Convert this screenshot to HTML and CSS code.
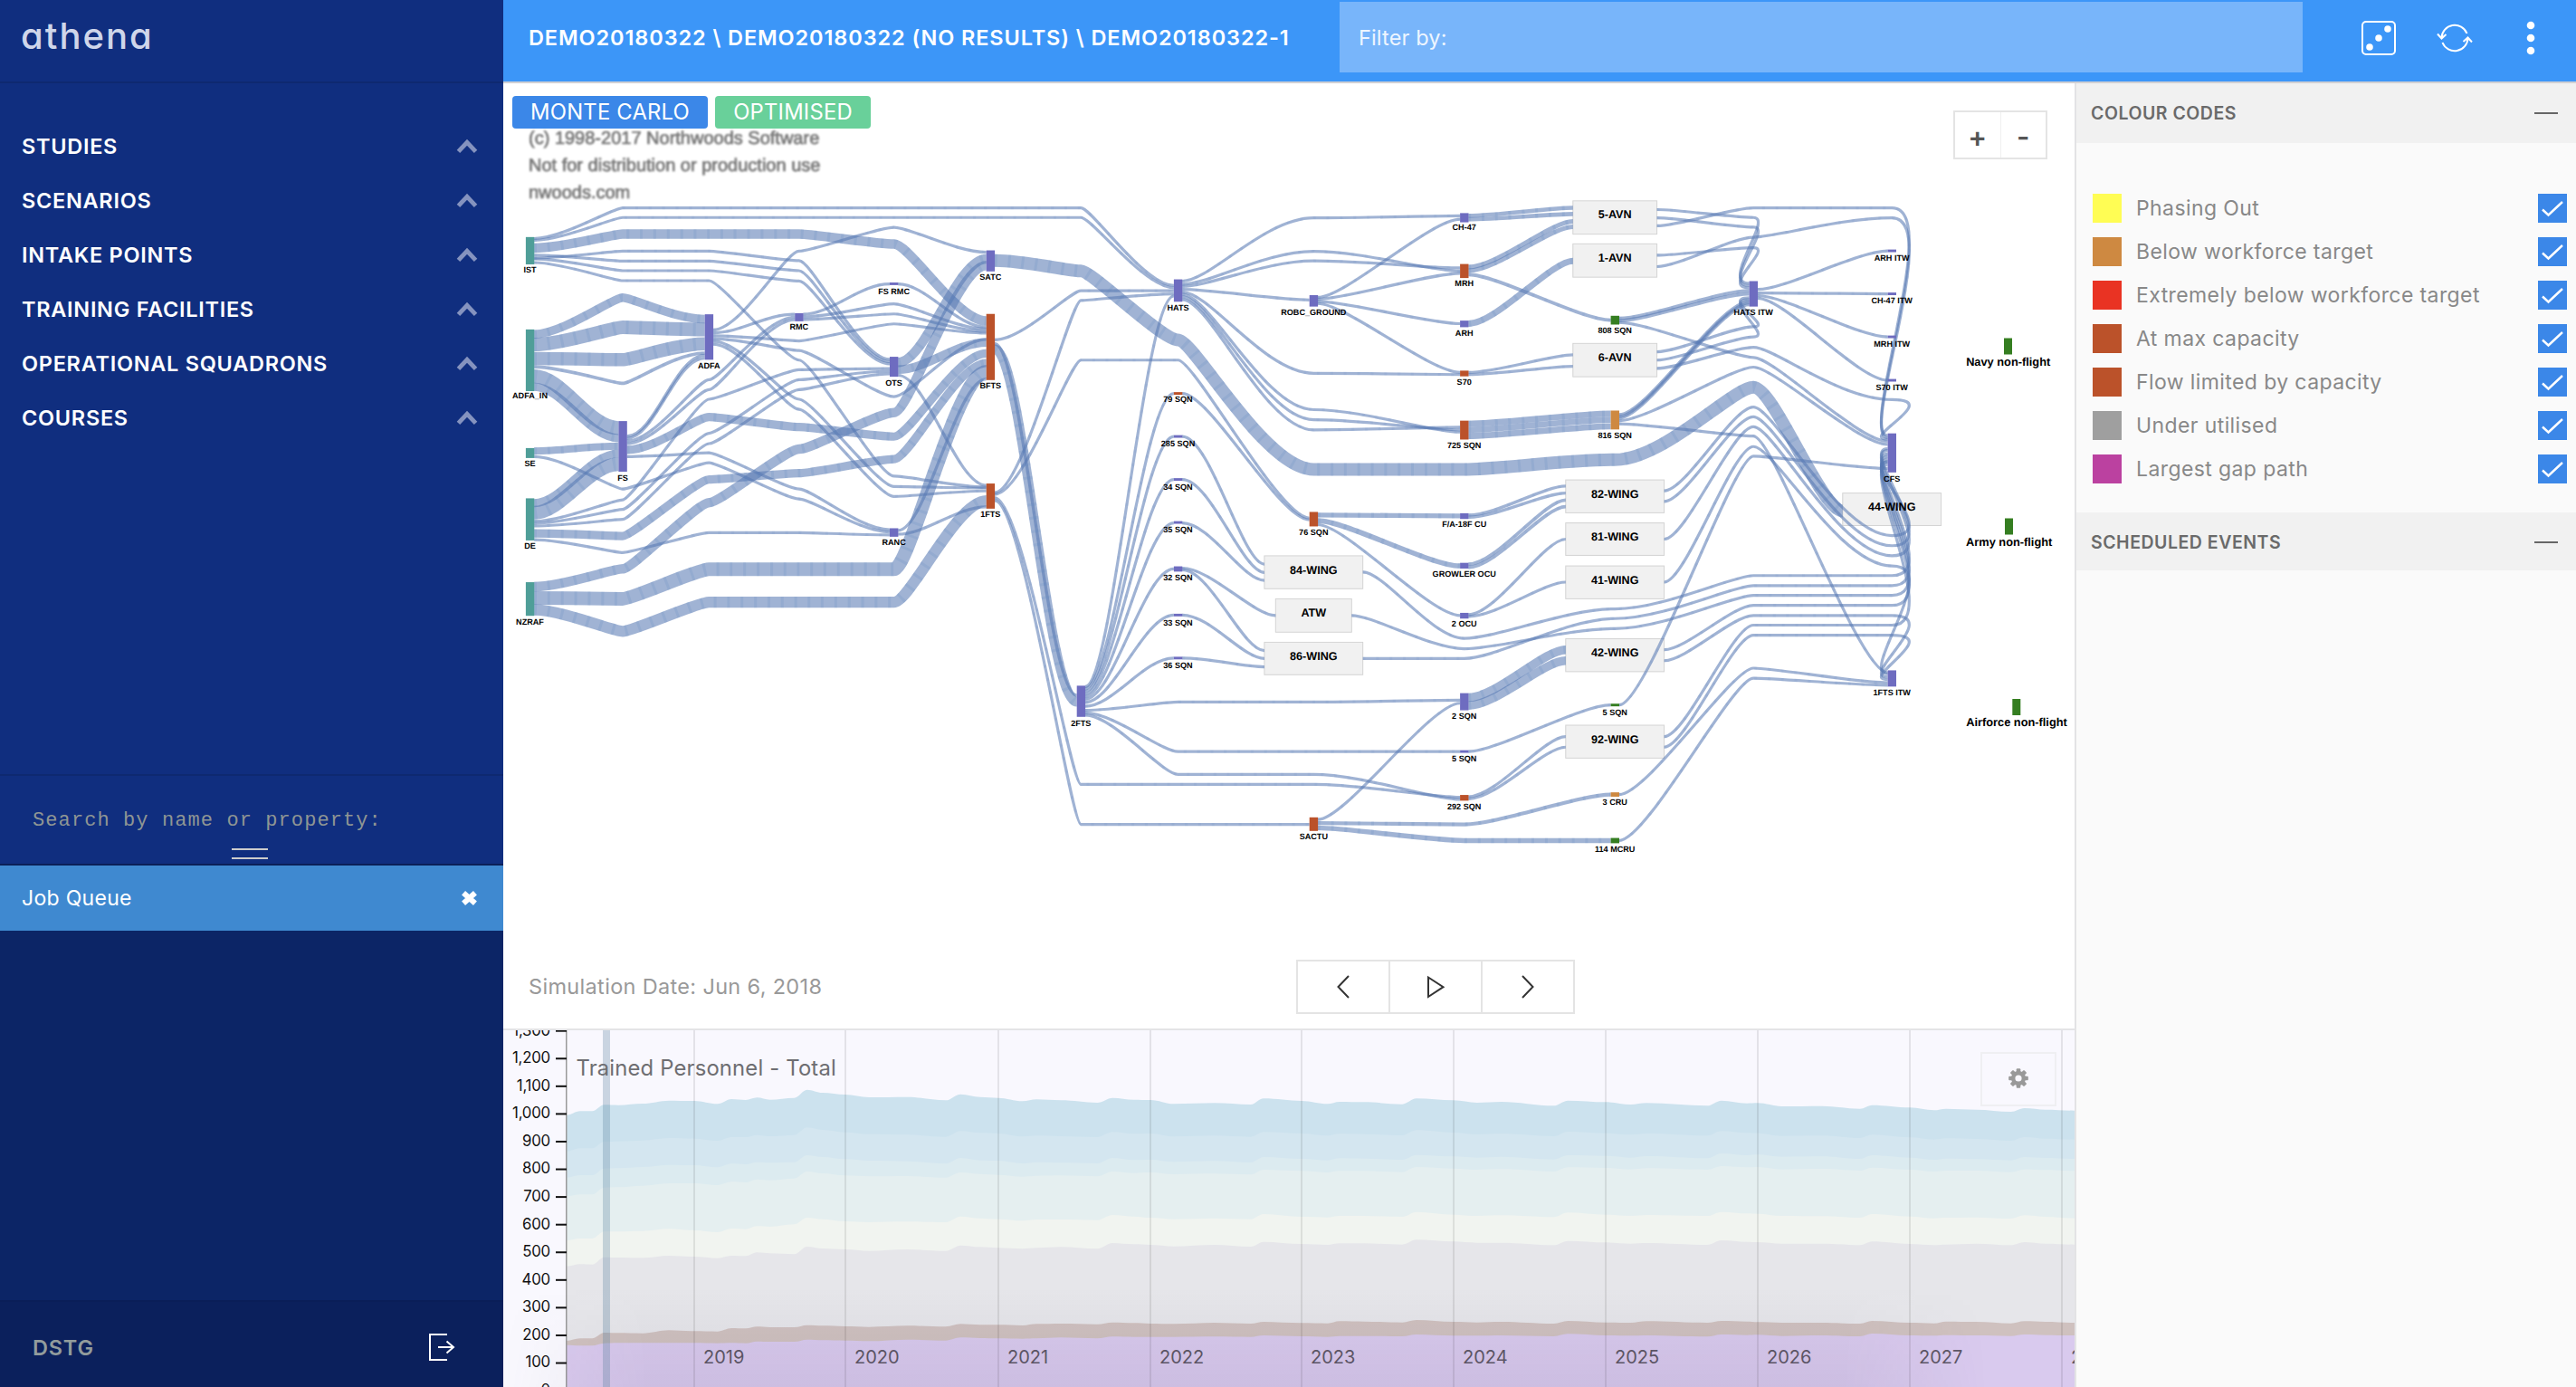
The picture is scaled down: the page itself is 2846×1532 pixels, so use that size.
FILE: index.html
```html
<!DOCTYPE html>
<html lang="en">
<head>
<meta charset="utf-8">
<title>athena</title>
<link rel="stylesheet" href="styles.css">
</head>
<body>
<div class="app">
  <aside class="sidebar">
    <div class="brand">athena</div>
    <nav class="menu">
      <a class="menu-item">STUDIES<svg class="chev" viewBox="0 0 22 16"><path d="M2 13.500 11 4l9 9.500"/></svg></a>
      <a class="menu-item">SCENARIOS<svg class="chev" viewBox="0 0 22 16"><path d="M2 13.500 11 4l9 9.500"/></svg></a>
      <a class="menu-item">INTAKE POINTS<svg class="chev" viewBox="0 0 22 16"><path d="M2 13.500 11 4l9 9.500"/></svg></a>
      <a class="menu-item">TRAINING FACILITIES<svg class="chev" viewBox="0 0 22 16"><path d="M2 13.500 11 4l9 9.500"/></svg></a>
      <a class="menu-item">OPERATIONAL SQUADRONS<svg class="chev" viewBox="0 0 22 16"><path d="M2 13.500 11 4l9 9.500"/></svg></a>
      <a class="menu-item">COURSES<svg class="chev" viewBox="0 0 22 16"><path d="M2 13.500 11 4l9 9.500"/></svg></a>
    </nav>
    <div class="search">
      <span class="search-hint">Search by name or property:</span>
      <span class="grip"></span>
    </div>
    <div class="queue-head"><span>Job Queue</span>
      <svg class="close" viewBox="0 0 16 14"><path d="M3 2.500 13 11.500M13 2.500 3 11.500"/></svg>
    </div>
    <div class="queue-body"></div>
    <footer class="account"><span>DSTG</span>
      <svg class="logout" viewBox="0 0 30 32"><path d="M21 2H2v28h19M11 16h17M20.500 9.500 28 16l-7.500 6.500"/></svg>
    </footer>
  </aside>

  <header class="topbar">
    <div class="crumbs">DEMO20180322 \ DEMO20180322 (NO RESULTS) \ DEMO20180322-1</div>
    <div class="filter">Filter by:</div>
    <div class="tools">
      <svg class="tool" viewBox="0 0 44 44"><rect x="4" y="4" width="36" height="36" rx="4"/><g class="solid"><circle cx="32" cy="12" r="3.800"/><circle cx="22" cy="22" r="3.800"/><circle cx="12" cy="32" r="3.800"/></g></svg>
      <svg class="tool" viewBox="0 0 44 44"><path d="M7.500 22a14.500 14.500 0 0 1 28-5M36.500 22a14.500 14.500 0 0 1-28 5M3 17.500l4.500 5 5-4.500M31.500 26l5-4.500 4.500 5"/></svg>
      <svg class="tool" viewBox="0 0 44 44"><g class="solid"><circle cx="22" cy="8" r="4.300"/><circle cx="22" cy="22" r="4.300"/><circle cx="22" cy="36" r="4.300"/></g></svg>
    </div>
  </header>

  <main class="main">
    <section class="stage">
      <svg id="flow" class="flow" viewBox="556 92 1736 946"></svg>
      <div class="tags"><span class="tag tag-blue">MONTE CARLO</span><span class="tag tag-green">OPTIMISED</span></div>
      <div class="zoom"><button>+</button><button>-</button></div>
    </section>
    <section class="playback">
      <span class="sim-date">Simulation Date: Jun 6, 2018</span>
      <div class="player">
        <button><svg viewBox="0 0 30 30"><path d="M21 3 9.500 15 21 27"/></svg></button>
        <button><svg viewBox="0 0 30 30"><path d="M7 4.500v21.500L23.500 15.200z"/></svg></button>
        <button><svg viewBox="0 0 30 30"><path d="M9 3 20.500 15 9 27"/></svg></button>
      </div>
    </section>
    <section class="chart-wrap">
      <svg id="chart" class="chart" viewBox="556 1138 1736 394"></svg>
      <div class="chart-shade"></div>
      <button class="gear"><svg viewBox="-12 -12 24 24"><g id="teeth"></g><path fill-rule="evenodd" d="M0-8a8 8 0 1 0 0 16a8 8 0 1 0 0-16zM0-3.600a3.600 3.600 0 1 1 0 7.200a3.600 3.600 0 1 1 0-7.200z"/></svg></button>
    </section>
  </main>

  <aside class="panel">
    <h2 class="panel-head">COLOUR CODES<i></i></h2>
    <ul class="legend">
      <li><b class="sw yellow"></b><span>Phasing Out</span><svg class="check" viewBox="0 0 32 32"><path d="M5 17.500l6.500 6L27 9"/></svg></li>
      <li><b class="sw ochre"></b><span>Below workforce target</span><svg class="check" viewBox="0 0 32 32"><path d="M5 17.500l6.500 6L27 9"/></svg></li>
      <li><b class="sw red"></b><span>Extremely below workforce target</span><svg class="check" viewBox="0 0 32 32"><path d="M5 17.500l6.500 6L27 9"/></svg></li>
      <li><b class="sw rust"></b><span>At max capacity</span><svg class="check" viewBox="0 0 32 32"><path d="M5 17.500l6.500 6L27 9"/></svg></li>
      <li><b class="sw rust"></b><span>Flow limited by capacity</span><svg class="check" viewBox="0 0 32 32"><path d="M5 17.500l6.500 6L27 9"/></svg></li>
      <li><b class="sw grey"></b><span>Under utilised</span><svg class="check" viewBox="0 0 32 32"><path d="M5 17.500l6.500 6L27 9"/></svg></li>
      <li><b class="sw magenta"></b><span>Largest gap path</span><svg class="check" viewBox="0 0 32 32"><path d="M5 17.500l6.500 6L27 9"/></svg></li>
    </ul>
    <h2 class="panel-head short">SCHEDULED EVENTS<i></i></h2>
  </aside>
</div>
<script src="app.js"></script>
</body>
</html>
```
FILE: styles.css
```css
* { box-sizing: border-box; margin: 0; padding: 0; }
body { width: 2846px; height: 1532px; overflow: hidden; background: #fff; font-family: Inter, "Liberation Sans", sans-serif; }
button { background: none; border: 0; font: inherit; display: flex; align-items: center; justify-content: center; }
.app { display: grid; grid-template-columns: 556px 1736px 554px; grid-template-rows: 92px 1440px; }

.sidebar { grid-row: 1 / 3; display: flex; flex-direction: column; background: #102e7f; color: #fff; }
.brand { height: 92px; border-bottom: 2px solid #0e2970; padding: 15px 0 0 23px; font-size: 40px; font-weight: 500; line-height: 50px; letter-spacing: 2px; color: #cfd6ea; font-feature-settings: "cv11"; }
.menu { height: 763px; padding-top: 39px; }
.menu-item { height: 60px; padding: 0 28px 0 24px; display: flex; align-items: center; justify-content: space-between; font-size: 23.500px; font-weight: 600; letter-spacing: 0.720px; }
.chev { width: 24px; height: 17px; fill: none; stroke: #8593bf; stroke-width: 4.500; }
.search { height: 101px; border-top: 2px solid #0e2970; border-bottom: 2px solid #0b2058; padding: 35px 0 0 36px; display: flex; flex-direction: column; }
.search-hint { height: 45px; line-height: 30px; font-family: "Liberation Mono", monospace; font-size: 22px; letter-spacing: 1.090px; color: #8f9694; }
.grip { width: 40px; height: 12px; margin-left: 220px; border-top: 2px solid #ccc; border-bottom: 2px solid #ccc; }
.queue-head { height: 72px; background: #3f89d0; display: flex; align-items: center; justify-content: space-between; padding: 0 27px 0 24px; font-size: 23px; letter-spacing: 0.300px; }
.close { width: 21px; height: 18px; fill: none; stroke: #fff; stroke-width: 4.600; }
.queue-body { flex: 1; background: #0c2566; }
.account { height: 96px; border-top: 2px solid #0a1e58; background: #0b205c; display: flex; align-items: center; justify-content: space-between; padding: 6px 53px 0 36px; color: #929c9c; font-size: 23.500px; font-weight: 600; letter-spacing: 0.800px; }
.logout { width: 30px; height: 32px; fill: none; stroke: #fff; stroke-width: 2; margin-top: -1px; }

.topbar { grid-column: 2 / 4; background: #3c96f8; border-bottom: 2px solid #d0d0d4; display: flex; color: #fff; }
.crumbs { width: 924px; padding-left: 28px; line-height: 84px; font-size: 23.500px; font-weight: 600; letter-spacing: 0.900px; white-space: nowrap; }
.filter { width: 1064px; height: 78px; margin-top: 2px; padding-left: 21px; line-height: 79px; background: #78b5fa; font-size: 23.500px; letter-spacing: 0.150px; color: #eef6ff; }
.tools { display: flex; gap: 40px; padding: 20px 0 0 62px; }
.tool { width: 44px; height: 44px; fill: none; stroke: #fff; stroke-width: 2; }
.solid { fill: #fff; stroke: none; }

.main { display: flex; flex-direction: column; }
.stage { position: relative; height: 946px; }
.flow { display: block; width: 1736px; height: 946px; text-rendering: geometricPrecision; }
.band, .stripe { fill: none; stroke: #587ab4; stroke-opacity: 0.570; }
.stripe { stroke: #5f8ac4; stroke-opacity: 0.180; stroke-dasharray: 3 11.800; }
.stripe.thin { stroke-opacity: 0.100; }
.wing { fill: #f1f1f1; stroke: #d4d4d4; stroke-width: 1; }
.node-label { font: bold 9.100px "Liberation Sans", Arial, sans-serif; text-anchor: middle; }
.wing-label { font: bold 12.600px "Liberation Sans", Arial, sans-serif; text-anchor: middle; }
.big-label { font: bold 12.800px "Liberation Sans", Arial, sans-serif; text-anchor: middle; }
.watermark { font: 20px "Liberation Sans", Arial, sans-serif; fill: #777; stroke: #777; stroke-width: 0.700; filter: blur(0.900px); }
.tags { position: absolute; left: 10px; top: 14px; display: flex; gap: 8px; }
.tag { height: 36px; line-height: 36px; border-radius: 4px; color: #fff; font-size: 23.800px; letter-spacing: 0.200px; text-align: center; }
.tag-blue { width: 216px; background: #3b87e8; }
.tag-green { width: 172px; background: #69d09a; }
.zoom { position: absolute; left: 1602px; top: 30px; width: 104px; height: 54px; border: 2px solid #e4e4e4; background: #fff; display: flex; }
.zoom button { flex: 1; padding-top: 2px; font-size: 31px; font-weight: 600; color: #555; }
.zoom button + button { border-left: 1px solid #f0f0f0; }

.playback { height: 100px; border-bottom: 2px solid #e4e4e6; display: flex; }
.sim-date { width: 876px; padding: 37px 0 0 28px; font-size: 23.500px; letter-spacing: 0.330px; line-height: 30px; color: #999; }
.player { margin-top: 22px; width: 308px; height: 60px; border: 2px solid #e4e4e4; display: flex; }
.player button { flex: 1; }
.player button + button { border-left: 2px solid #e4e4e4; }
.player svg { width: 30px; height: 30px; fill: none; stroke: #333; stroke-width: 2; }

.chart-wrap { position: relative; height: 394px; background: #f9f8fe; overflow: hidden; }
.chart { display: block; width: 1736px; height: 394px; }
.chart-shade { position: absolute; left: 0; right: 0; bottom: 0; height: 110px; background: linear-gradient(rgba(60, 50, 80, 0), rgba(60, 50, 80, 0.080)); -webkit-mask: linear-gradient(90deg, transparent 0, #000 160px, #000 1480px, transparent 1640px); }
.axis-label { font: 16.800px Inter, sans-serif; letter-spacing: -0.200px; text-anchor: end; fill: #111; }
.year { font: 20px Inter, sans-serif; fill: #5e5766; }
.chart-title { font: 23.800px Inter, sans-serif; letter-spacing: 0.180px; fill: #6e6e72; }
.gear { position: absolute; left: 1632px; top: 24px; width: 84px; height: 60px; border: 2px solid #efeff2; }
.gear svg { width: 24px; height: 24px; fill: #999; margin-top: -2px; margin-right: 1px; }

.panel { background: #fafafa; border-left: 2px solid #e3e3e5; }
.panel-head { height: 66px; background: #f1f1f1; display: flex; align-items: center; justify-content: space-between; padding: 0 20px 0 16px; font-size: 19.500px; font-weight: 600; letter-spacing: 0.520px; color: #6a6a6a; }
.panel-head.short { height: 64px; padding-top: 1px; }
.panel-head i { width: 26px; height: 2px; background: #666; }
.legend { list-style: none; height: 408px; padding-top: 48px; }
.legend li { height: 48px; display: flex; align-items: center; padding: 0 10px 0 18px; font-size: 23px; letter-spacing: 0.400px; color: #888; }
.legend span { flex: 1; padding-left: 16px; }
.sw { width: 32px; height: 32px; }
.check { width: 32px; height: 32px; background: #3b87e8; fill: none; stroke: #fff; stroke-width: 2.400; }
.yellow { background: #fffd54; } .ochre { background: #ce8941; } .red { background: #e93323; }
.rust { background: #bb522a; } .grey { background: #9f9f9f; } .magenta { background: #bb41a0; }
```
FILE: app.js
```js
const NS = 'http://www.w3.org/2000/svg';
function add(parent, tag, attrs, text) {
  const el = document.createElementNS(NS, tag);
  for (const k in attrs) el.setAttribute(k, attrs[k]);
  if (text !== undefined) el.textContent = text;
  parent.appendChild(el);
  return el;
}

/* ---------- workforce flow diagram ---------- */
const flow = document.getElementById('flow');

// Layer centres and the reach of the curve handles inside each layer.
const LAYER_X = [585.5, 688, 783.3, 882.8, 987.6, 1094.3, 1194.3, 1301.5, 1451.3, 1617.7, 1784.2, 1937.2, 2090.2];
const REACH = [12, 11, 13, 15, 18, 14, 12, 18, 54, 36, 54, 23, 58];
const westY = v => 90 + v / 2.45;
const eastY = v => 200 + v / 2.0632;

const TEAL = '#4f9e98', PURPLE = '#6e6cc0', RUST = '#bb522a', OCHRE = '#ce8941', GREEN = '#357e21';

// [layer, top, bottom, colour, label, label centre]
const westNodes = [
  [0, 421, 495, TEAL, 'IST', 509], [0, 671, 838, TEAL, 'ADFA_IN', 851], [0, 992, 1019, TEAL, 'SE', 1033],
  [0, 1128, 1242, TEAL, 'DE', 1256], [0, 1355, 1446, TEAL, 'NZRAF', 1462],
  [1, 919, 1056, PURPLE, 'FS', 1072], [2, 630, 753, PURPLE, 'ADFA', 768], [3, 627, 649, PURPLE, 'RMC', 663],
  [4, 544, 551, PURPLE, 'FS RMC', 568], [4, 745, 799, PURPLE, 'OTS', 815], [4, 1209, 1232, PURPLE, 'RANC', 1246],
  [5, 457, 514, PURPLE, 'SATC', 528], [5, 629, 808, RUST, 'BFTS', 822], [5, 1088, 1156, RUST, '1FTS', 1170]
];
const eastNodes = [
  [6, 1150, 1221, PURPLE, '2FTS', 1235], [7, 224, 275, PURPLE, 'HATS', 288], [7, 481, 487, RUST, '79 SQN', 498],
  [7, 579, 585, PURPLE, '285 SQN', 598], [7, 677, 683, PURPLE, '34 SQN', 697], [7, 775, 781, PURPLE, '35 SQN', 794],
  [7, 878, 890, PURPLE, '32 SQN', 903], [7, 986, 992, PURPLE, '33 SQN', 1006], [7, 1084, 1090, PURPLE, '36 SQN', 1104],
  [8, 260, 286, PURPLE, 'ROBC_GROUND', 298], [8, 754, 787, RUST, '76 SQN', 800], [8, 1450, 1481, RUST, 'SACTU', 1493],
  [9, 73, 94, PURPLE, 'CH-47', 106], [9, 189, 221, RUST, 'MRH', 232], [9, 318, 333, PURPLE, 'ARH', 346],
  [9, 432, 445, RUST, 'S70', 457], [9, 546, 589, RUST, '725 SQN', 602], [9, 757, 770, PURPLE, 'F/A-18F CU', 781],
  [9, 870, 883, PURPLE, 'GROWLER OCU', 895], [9, 984, 997, PURPLE, '2 OCU', 1008], [9, 1167, 1206, PURPLE, '2 SQN', 1219],
  [9, 1297, 1303, PURPLE, '5 SQN', 1316], [9, 1399, 1412, RUST, '292 SQN', 1425],
  [10, 307, 327, GREEN, '808 SQN', 340], [10, 523, 566, OCHRE, '816 SQN', 579], [10, 1191, 1197, GREEN, '5 SQN', 1210],
  [10, 1393, 1403, OCHRE, '3 CRU', 1415], [10, 1497, 1509, GREEN, '114 MCRU', 1522],
  [11, 228, 286, PURPLE, 'HATS ITW', 298],
  [12, 156, 162, PURPLE, 'ARH ITW', 175], [12, 254, 260, PURPLE, 'CH-47 ITW', 273], [12, 352, 358, PURPLE, 'MRH ITW', 371],
  [12, 451, 457, PURPLE, 'S70 ITW', 470], [12, 575, 664, PURPLE, 'CFS', 678], [12, 1115, 1152, PURPLE, '1FTS ITW', 1165]
];
// [layer, top, bottom, half width, label]
const wings = [
  [8, 854, 929, 54.4, '84-WING'], [8, 952, 1028, 42, 'ATW'], [8, 1051, 1125, 54.4, '86-WING'],
  [10, 45, 121, 46.4, '5-AVN'], [10, 143, 219, 46.4, '1-AVN'], [10, 370, 446, 46.4, '6-AVN'],
  [10, 681, 756, 54.4, '82-WING'], [10, 779, 853, 54.4, '81-WING'], [10, 877, 952, 54.4, '41-WING'],
  [10, 1043, 1118, 54.4, '42-WING'], [10, 1240, 1315, 54.4, '92-WING'], [12, 711, 785, 54.4, '44-WING']
];

// [width, layer, y, layer, y, ...]; layer -1 loops back into the node of the previous layer
const westLinks = [
  [10.5, 0,451, 1,413, 2,413, 3,413, 4,440, 5,648],
  [2.8, 0,470, 1,486, 2,486, 3,512, 4,758], [2.8, 0,478, 1,459, 2,459, 3,485, 4,752],
  [2.8, 0,480, 1,512, 2,512, 3,540, 4,764], [2.8, 0,490, 1,539, 2,539, 3,754, 4,1068, 5,1098],
  [9.5, 0,684, 1,585, 2,643], [15, 0,712, 1,665, 2,671], [14.5, 0,750, 1,753, 2,710], [3.3, 0,772, 1,817, 2,735],
  [15.3, 0,798, 1,938], [9, 0,826, 1,965], [8, 0,1000, 1,987], [2.8, 0,1015, 1,1103, 2,1032, 3,1130, 4,1219],
  [9, 0,1141, 1,1007], [15, 0,1167, 1,1036],
  [2.8, 0,1190, 1,1132, 2,860, 3,780, 4,777], [2.8, 0,1196, 1,1158, 2,952, 3,807, 4,784], [2.8, 0,1203, 1,1185, 2,980, 3,834, 4,791],
  [9.2, 0,1223, 1,1230, 2,1077, 3,1060, 4,1022, 5,762], [2.8, 0,1240, 1,1275, 2,1221, 3,1221, 4,1227],
  [10.5, 0,1367, 1,1319, 2,1140, 3,995, 4,896, 5,498], [15, 0,1398, 1,1400, 2,1320, 3,1320, 4,1320, 5,785],
  [12.3, 0,1430, 1,1488, 2,1409, 3,1409, 4,1409, 5,1135],
  [2.8, 2,672, 3,459, 4,395, 5,462], [2.8, 2,680, 3,630], [2.8, 2,688, 3,702, 4,656, 5,681], [2.8, 2,696, 3,728, 4,853, 5,698],
  [2.8, 2,703, 3,860, 4,1096, 5,1100], [2.8, 2,711, 3,887, 4,1123, 5,1108],
  [2.8, 1,960, 2,741], [2.8, 1,966, 2,749], [2.8, 1,973, 2,807, 3,638], [2.8, 1,980, 2,834, 3,645],
  [9.2, 1,997, 2,908, 3,935, 4,961, 5,736], [2.8, 1,1015, 2,1005, 3,1103, 4,1213],
  [2.8, 3,630, 4,548], [2.8, 4,548, 5,665], [2.8, 3,637, 4,602, 5,670], [2.8, 3,644, 4,629, 5,676],
  [10.5, 4,760, 5,480], [9.5, 4,780, 5,706], [2.8, 4,795, 5,1093],
  [2.8, 4,1215, 5,805], [2.8, 4,1225, 5,1151]
];
const eastLinks = [
  [2.8, 0,131, 1,61, 6,61, 7,238], [2.8, 0,135, 1,83, 6,83, 7,243],
  [14, 5,181, 6,205, 7,362, 8,657, 9,657, 10,635, 11,470, 12,752],
  [2.8, 5,362, 6,250, 7,250], [3, 5,371, 6,1172], [10.5, 5,383, 6,1187],
  [2.8, 5,710, 6,272, 7,257], [2.8, 5,714, 6,408, 7,408, 8,768], [2.8, 5,722, 6,1375, 7,1375, 8,1375, 9,1404], [2.8, 5,728, 6,1466, 7,1466, 8,1466],
  [2.8, 6,1152, 7,262], [2.8, 6,1157, 7,484], [2.8, 6,1163, 7,582], [2.8, 6,1169, 7,680], [2.8, 6,1175, 7,779],
  [2.8, 6,1181, 7,884], [2.8, 6,1188, 7,989], [2.8, 6,1197, 7,1087], [2.8, 6,1206, 7,1187, 8,1187, 9,1183],
  [2.8, 6,1212, 7,1300, 8,1300, 9,1300], [2.8, 6,1217, 7,1352, 8,1352, 9,1409],
  [2.8, 7,228, 8,84, 9,79], [2.8, 7,235, 8,160, 9,205], [2.8, 7,240, 8,182, 9,198], [2.8, 7,247, 8,271],
  [2.8, 7,253, 8,438, 9,441], [2.8, 7,258, 8,521, 9,572], [2.8, 7,264, 8,544, 9,567], [2.8, 7,270, 8,567, 9,561],
  [2.8, 7,484, 8,772], [2.8, 7,582, 8,873], [2.8, 7,680, 8,892], [2.8, 7,779, 8,910],
  [2.8, 7,882, 8,990], [2.8, 7,886, 8,1070], [2.8, 7,989, 8,1088], [2.8, 7,1087, 8,1107],
  [2.8, 8,891, 9,1042, 10,975, 11,899, 12,899, -1,622], [2.8, 8,990, 9,1066, 10,1020, 11,944, 12,944, -1,634],
  [2.8, 8,1088, 9,1088, 10,997, 11,922, 12,922, -1,628],
  [2.8, 8,265, 9,87], [2.8, 8,269, 9,210], [2.8, 8,274, 9,325], [2.8, 8,279, 9,436],
  [4.6, 9,79, 10,61], [4.6, 9,87, 10,75], [5, 9,196, 10,92], [5, 9,204, 10,104], [3.8, 9,213, 10,317],
  [7, 9,325, 10,182], [2.8, 9,436, 10,396], [2.8, 9,441, 10,422],
  [6.8, 9,553, 10,530], [6.8, 9,567, 10,544], [6.8, 9,581, 10,559],
  [5.3, 8,761, 9,763], [5.6, 8,774, 9,877], [2.8, 8,783, 9,990],
  [3, 9,761, 10,695], [3, 9,766, 10,711], [3.4, 9,873, 10,727], [3.4, 9,880, 10,742], [2.8, 9,988, 10,816], [2.8, 9,992, 10,914],
  [9.5, 9,1177, 10,1068], [9.5, 9,1195, 10,1093], [2.8, 9,1300, 10,1194], [2.8, 9,1403, 10,1266], [2.8, 9,1408, 10,1290],
  [2.8, 8,1455, 9,1190], [4.2, 8,1463, 9,1466, 10,1398], [5.4, 8,1474, 9,1503, 10,1503],
  [2.8, 10,65, 11,83, -1,233], [2.8, 10,84, 11,105, -1,238], [2.8, 10,102, 11,61, 12,61, -1,580],
  [2.8, 10,169, 11,152, -1,243], [2.8, 10,195, 11,128, 12,84, -1,585],
  [2.8, 10,389, 11,332, -1,266], [2.8, 10,408, 11,355, -1,270], [2.8, 10,427, 11,379, 12,498, -1,588],
  [3.4, 10,313, 11,250], [3.4, 10,318, 11,257], [2.8, 10,322, 11,402, 12,593],
  [2.8, 10,532, 11,274], [2.8, 10,536, 11,278], [2.8, 10,540, 11,282], [2.8, 10,546, 11,424, 12,600], [2.8, 10,553, 11,581, 12,1120],
  [2.8, 11,247, 12,159], [2.8, 11,255, 12,257], [2.8, 11,261, 12,355], [2.8, 11,267, 12,454],
  [2.8, 10,706, 11,515, 12,808, -1,640], [2.8, 10,730, 11,537, 12,831, -1,610], [2.8, 10,816, 11,560, 12,854, -1,614],
  [2.8, 10,914, 11,605, 12,877, -1,1123], [2.8, 10,1194, 11,627, 12,655],
  [2.8, 10,1068, 11,967, 12,967, -1,640], [2.8, 10,1093, 11,990, 12,990, -1,1130],
  [2.8, 10,1266, 11,1012, 12,1012, -1,646], [2.8, 10,1290, 11,1035, 12,1035, -1,1136],
  [2.8, 10,1398, 11,1110, 12,1143], [2.8, 10,1503, 11,1133, 12,1149]
];

for (const [l, t, b, h] of wings) {
  add(flow, 'rect', { class: 'wing', x: LAYER_X[l] - h, y: eastY(t), width: h * 2, height: eastY(b) - eastY(t) });
}

// Half width of whatever sits at a link's end: a wing box or a plain node.
function halfAt(layer, y, toY) {
  if (toY === eastY) for (const w of wings) if (w[0] === layer && y >= w[1] && y <= w[2]) return w[3];
  return 4.6;
}
function drawLink(spec, toY) {
  const width = spec[0] < 3.5 ? spec[0] + 0.4 : spec[0], pts = [];
  for (let i = 1; i < spec.length; i += 2) pts.push([spec[i], spec[i + 1]]);
  let d = '';
  for (let i = 0; i < pts.length - 1; i++) {
    let [la, ya] = pts[i], [lb, yb] = pts[i + 1];
    const first = i === 0, last = i === pts.length - 2;
    if (lb === -1) lb = la;
    const ha = first ? halfAt(la, ya, toY) : 0;
    const hb = last ? halfAt(lb, yb, toY) : 0;
    const x1 = LAYER_X[la] + ha, x2 = LAYER_X[lb] - hb;
    const c1 = x1 + (first ? (ha > 5 ? 24 : 31) : REACH[la]);
    const c2 = x2 - (last ? (hb > 5 ? 24 : 33) : REACH[lb]);
    if (!d) d = `M${x1} ${toY(ya)}`;
    d += `C${c1} ${toY(ya)} ${c2} ${toY(yb)} ${x2} ${toY(yb)}`;
  }
  add(flow, 'path', { class: 'band', d, 'stroke-width': width });
  add(flow, 'path', { class: width < 3.9 ? 'stripe thin' : 'stripe', d, 'stroke-width': width });
}
westLinks.forEach(l => drawLink(l, westY));
eastLinks.forEach(l => drawLink(l, eastY));

function drawNode([l, t, b, fill, label, ly], toY) {
  add(flow, 'rect', { x: LAYER_X[l] - 4.6, y: toY(t), width: 9.4, height: toY(b) - toY(t), fill });
  add(flow, 'text', { class: 'node-label', x: LAYER_X[l], y: toY(ly) + 3.1 }, label);
}
westNodes.forEach(n => drawNode(n, westY));
eastNodes.forEach(n => drawNode(n, eastY));
for (const [l, t, b, h, label] of wings) {
  add(flow, 'text', { class: 'wing-label', x: LAYER_X[l], y: eastY(t) + 19.6 }, label);
}
for (const [x, y, cx, label] of [[2214, 342.5, 2218.7, 'Navy non-flight'], [2215, 541.5, 2219.7, 'Army non-flight'], [2223.3, 741, 2228, 'Airforce non-flight']]) {
  add(flow, 'rect', { x, y: y + 31, width: 9, height: 18, fill: GREEN });
  add(flow, 'text', { class: 'big-label', x: cx, y: y + 61 }, label);
}
['(c) 1998-2017 Northwoods Software', 'Not for distribution or production use', 'nwoods.com'].forEach((t, i) =>
  add(flow, 'text', { class: 'watermark', x: 584, y: 159.2 + i * 30 }, t));

/* ---------- trained personnel chart ---------- */
const chart = document.getElementById('chart');
const parse = s => s.split(',').map(Number);
const lift = a => a.map(v => v + 420);
const xs = [
  ...parse('157,190,220,250,285,345,410,473,530,565,600,628,660,720,752,790,846,905,1000,1095,1132,1180,1225,1285,1320,1380,1470,1508,1560').map(v => 556 + v / 2.24),
  ...parse('92,150,250,340,372,466,530,560,620,715,750,842,900,960,1090,1125,1219,1280,1320,1470,1505,1568').map(v => 1230 + v / 2.24),
  ...parse('126,205,340,465,505,630,710,750,850,965,1010,1080,1176').map(v => 1900 + v / 3)
];
const layers = [
  ['#cce2ee', '575,562,562,541,542,537,527,528,538,522,525,517,524,518,491,501,507,516,515,526,506,515,518,529,523,526,534,518,524', '105,118,115,120,100,108,118,111,112,119,100,106,114,111,124,107,112,120,115,124,107,116', '535,546,545,554,542,550,559,554,557,564,552,557,560'],
  ['#d4e6f0', '695,685,685,663,662,659,651,653,660,648,648,641,645,641,616,624,632,638,640,647,628,634,636,646,643,645,648,631,637', '216,226,223,227,211,216,223,217,218,222,205,213,219,217,225,210,215,220,216,223,208,214', '635,644,643,651,640,649,656,652,654,660,648,653,656'],
  ['#dcebf0', '782,774,774,752,751,747,740,741,748,736,738,731,733,731,708,714,721,726,728,736,717,725,726,735,731,733,735,717,724', '303,310,307,312,294,300,305,298,299,303,287,292,296,293,302,288,290,296,291,298,282,288', '706,713,712,720,708,716,723,719,721,725,714,717,720'],
  ['#e5eff0', '844,838,838,815,814,809,801,801,807,796,798,788,791,785,762,768,775,778,777,782,765,770,773,779,776,775,778,762,767', '345,351,349,352,336,340,345,340,340,344,327,332,336,334,342,328,330,335,331,336,324,328', '747,755,753,759,749,756,762,759,759,764,755,757,760'],
  ['#f1f4f0', '990,984,984,961,961,959,952,957,963,951,953,943,945,937,915,920,927,930,928,930,911,917,920,925,921,921,923,906,911', '495,500,497,500,483,492,494,489,489,492,476,485,489,487,493,478,485,489,486,489,476,481', '902,909,910,915,903,911,917,915,914,918,907,912,917'],
  ['#e6e6ea', '1076,1069,1070,1046,1047,1048,1041,1044,1049,1041,1042,1030,1033,1036,1011,1017,1020,1025,1020,1025,1007,1012,1015,1018,1015,1012,1018,999,1003', '585,590,585,591,575,582,585,580,580,584,568,574,578,578,586,572,577,581,579,585,570,575', '996,1001,1001,1006,994,1002,1006,1004,1001,1006,996,1001,1004'],
  ['#cfc1bf', '1323,1315,1315,1296,1297,1298,1288,1291,1292,1281,1282,1276,1278,1278,1271,1273,1275,1277,1273,1276,1267,1270,1270,1272,1267,1266,1268,1262,1264', '846,847,843,846,840,844,845,838,839,842,834,840,842,840,846,837,842,843,838,843,837,839', '1261,1263,1263,1266,1257,1263,1265,1259,1260,1265,1258,1260,1263'],
  ['#d9caee', '1337,1339,1339,1331,1330,1330,1330,1330,1331,1330,1331,1325,1326,1326,1319,1321,1322,1324,1319,1322,1312,1314,1315,1316,1315,1312,1315,1309,1310', '890,890,889,890,885,888,890,887,887,888,882,886,886,885,888,880,885,886,885,889,882,884', '1303,1307,1305,1308,1299,1305,1306,1304,1305,1307,1302,1304,1305']
];
for (const [fill, a, b, c] of layers) {
  const ys = [...parse(a), ...lift(parse(b)), ...parse(c)].map(v => 1040 + v / 3);
  let d = `M${xs[0]} ${ys[0]}`;
  for (let i = 1; i < xs.length; i++) {
    const m = (xs[i] - xs[i - 1]) * 0.35;
    d += `C${xs[i - 1] + m} ${ys[i - 1]} ${xs[i] - m} ${ys[i]} ${xs[i]} ${ys[i]}`;
  }
  add(chart, 'path', { d: d + 'V1540H626Z', fill });
}
add(chart, 'rect', { x: 666, y: 1138, width: 8, height: 394, fill: '#5a82a0', 'fill-opacity': 0.3 });
for (let i = 0; i < 10; i++) {
  const x = [767, 934, 1103, 1271, 1438, 1606, 1774, 1942, 2110, 2278][i];
  add(chart, 'rect', { x: x - 1, y: 1138, width: 2, height: 394, fill: '#000', 'fill-opacity': 0.085 });
  add(chart, 'text', { class: 'year', x: x + 10, y: 1506 }, 2019 + i);
}
add(chart, 'text', { class: 'chart-title', x: 636.5, y: 1188 }, 'Trained Personnel - Total');
add(chart, 'rect', { x: 625, y: 1138, width: 1.5, height: 394, fill: '#999' });
for (let v = 0; v <= 1300; v += 100) {
  const y = 1535.8 - v * 0.3057;
  add(chart, 'rect', { x: 614, y: y - 0.7, width: 12, height: 2, fill: '#111' });
  add(chart, 'text', { class: 'axis-label', x: 608, y: y + 5.2 }, v.toLocaleString('en-US'));
}

const teeth = document.getElementById('teeth');
for (let a = 0; a < 360; a += 45) add(teeth, 'rect', { x: -2.3, y: -10.8, width: 4.6, height: 5, rx: 1, transform: `rotate(${a})` });
```
